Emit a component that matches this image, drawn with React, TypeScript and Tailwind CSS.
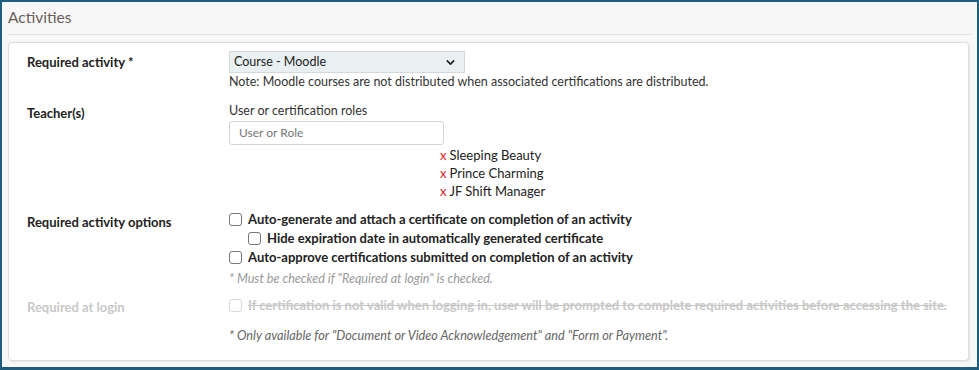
import { ChevronDown } from 'lucide-react';

const font = { fontFamily: 'Lato, "Noto Sans", sans-serif' };

function Box({ disabled = false }: { disabled?: boolean }) {
  return (
    <span
      className={`inline-block w-[13px] h-[13px] rounded-[3px] border bg-white shrink-0 ${
        disabled ? 'border-[#d9d9d9]' : 'border-[#767676]'
      }`}
    />
  );
}

function Row({
  label,
  muted = false,
  labelPad = '',
  children,
  className = '',
}: {
  label: string;
  muted?: boolean;
  labelPad?: string;
  children: React.ReactNode;
  className?: string;
}) {
  return (
    <div className={`flex ${className}`}>
      <div
        className={`w-[202px] shrink-0 font-bold text-[13px] leading-[18px] ${labelPad} ${
          muted ? 'text-[#c8c8c8]' : 'text-[#222]'
        }`}
      >
        {label}
      </div>
      <div className="flex-1">{children}</div>
    </div>
  );
}

export default function App() {
  const teachers = ['Sleeping Beauty', 'Prince Charming', 'JF Shift Manager'];

  return (
    <div
      className="w-[979px] h-[370px] border-2 border-b-[3px] border-[#1f5d7c] bg-[#f7f7f7] px-[6px] text-[#333]"
      style={font}
    >
      {/* Header */}
      <div className="h-[33px] border-b border-[#e3e3e3] flex items-center">
        <h2 className="text-[15.5px] text-[#6a5e5a] leading-none mt-[-1px]">Activities</h2>
      </div>

      {/* Card */}
      <div className="mt-[7px] w-[961px] h-[319px] bg-white border border-[#dcdcdc] rounded-[4px] shadow-[1px_1px_2px_rgba(0,0,0,0.08)] pl-[18px] pt-[10px] text-[12.5px] leading-[18px]">
        <Row label="Required activity *">
          <div className="w-[236px] h-[22px] mt-[-2px] bg-[#e9f0f2] border border-[#d4d9db] flex items-center justify-between px-[4px] text-[12.5px] text-[#222]">
            <span>Course - Moodle</span>
            <ChevronDown size={13} strokeWidth={3} className="mr-[3px]" />
          </div>
          <div className="leading-[18px]">
            Note: Moodle courses are not distributed when associated certifications are distributed.
          </div>
        </Row>

        <Row label="Teacher(s)" labelPad="pt-[2px]" className="mt-[11px]">
          <div className="leading-[18px]">User or certification roles</div>
          <div className="mt-[1px] w-[215px] h-[24px] border border-[#d4d4d4] rounded-[3px] flex items-center px-[9px] text-[12px] text-[#777]">
            User or Role
          </div>
          <div className="ml-[211px] mt-[1px]">
            {teachers.map((t) => (
              <div key={t} className="text-[#222] text-[13px] leading-[18px] h-[18px]">
                <span className="text-[#e02020] mr-[3px]">x</span>
                {t}
              </div>
            ))}
          </div>
        </Row>

        <Row label="Required activity options" labelPad="pt-[3px]" className="mt-[10px]">
          <div className="font-bold text-[#222] text-[13px] leading-[19px]">
            <label className="flex items-center gap-[6px] h-[19px]">
              <Box />
              Auto-generate and attach a certificate on completion of an activity
            </label>
            <label className="flex items-center gap-[6px] ml-[19px] h-[19px]">
              <Box />
              Hide expiration date in automatically generated certificate
            </label>
            <label className="flex items-center gap-[6px] h-[19px]">
              <Box />
              Auto-approve certifications submitted on completion of an activity
            </label>
          </div>
          <div className="italic text-[12.6px] leading-[18px] text-[#9a9a9a] mt-[3px]">
            * Must be checked if "Required at login" is checked.
          </div>
        </Row>

        <Row label="Required at login" muted labelPad="pt-[2px]" className="mt-[8px]">
          <label className="flex items-center gap-[6px] h-[18px] font-bold text-[13px] text-[#c8c8c8] line-through">
            <Box disabled />
            If certification is not valid when logging in, user will be prompted to complete required activities before accessing the site.
          </label>
          <div className="italic text-[12.7px] leading-[18px] text-[#666] mt-[12px]">
            * Only available for "Document or Video Acknowledgement" and "Form or Payment".
          </div>
        </Row>
      </div>
    </div>
  );
}
